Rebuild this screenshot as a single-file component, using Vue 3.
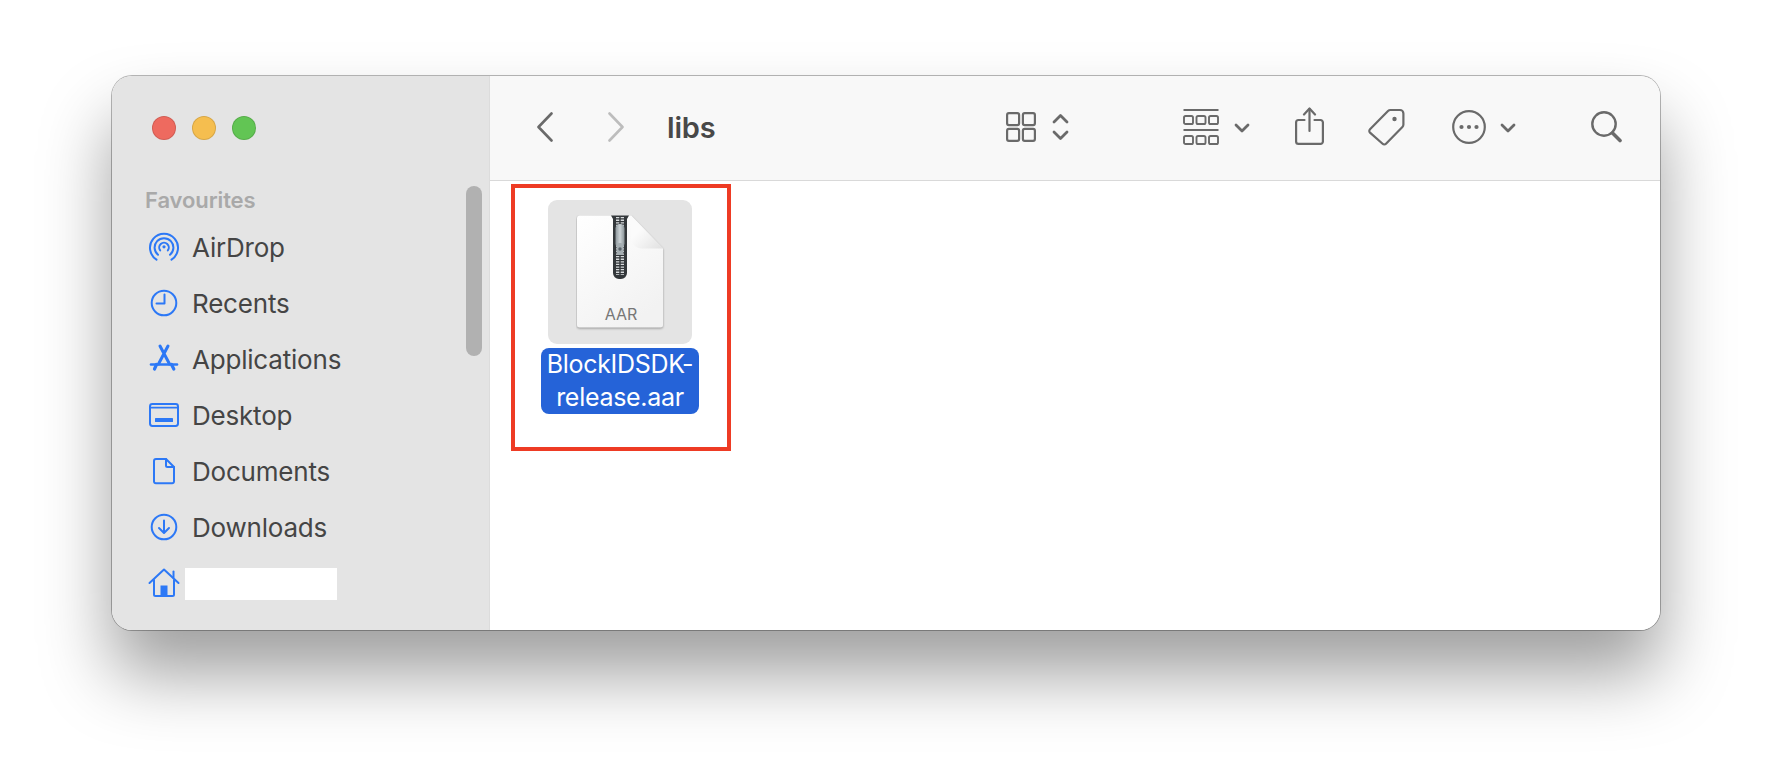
<script setup>
const favourites = [
  { label: 'AirDrop', icon: 'airdrop' },
  { label: 'Recents', icon: 'recents' },
  { label: 'Applications', icon: 'apps' },
  { label: 'Desktop', icon: 'desktop' },
  { label: 'Documents', icon: 'documents' },
  { label: 'Downloads', icon: 'downloads' },
];
</script>

<template>
  <div class="page">
    <div class="window">
      <aside class="sidebar">
        <div class="lights">
          <span class="light red"></span>
          <span class="light yellow"></span>
          <span class="light green"></span>
        </div>
        <div class="section-title">Favourites</div>
        <ul class="places">
          <li v-for="item in favourites" :key="item.label" class="place">
            <svg class="place-icon" viewBox="0 0 32 32" fill="none" stroke="#2c78f6" stroke-width="2" stroke-linecap="round" stroke-linejoin="round">
              <template v-if="item.icon === 'airdrop'">
                <path d="M8.500 28.600A14 14 0 1 1 23.500 28.600" />
                <path d="M10 23.800A9.400 9.400 0 1 1 22 23.800" />
                <path d="M12.200 19.400A4.800 4.800 0 1 1 19.800 19.400" />
                <circle cx="16" cy="15.800" r="1.600" fill="#2c78f6" stroke="none" />
              </template>
              <template v-else-if="item.icon === 'recents'">
                <circle cx="16" cy="16" r="12.300" />
                <path d="M16.500 7.500V16.500H8.500" />
              </template>
              <template v-else-if="item.icon === 'apps'">
                <path d="M12 3L21.500 21M20 3L10.500 21" stroke-width="3" />
                <path d="M3 21.500H29" stroke-width="2.600" />
                <path d="M8.500 21.500L6.500 26M23.500 21.500L25.800 26" stroke-width="3.200" />
              </template>
              <template v-else-if="item.icon === 'desktop'">
                <rect x="2" y="5" width="28" height="22" rx="2.400" />
                <path d="M2 8.600H30" stroke-width="1.600" />
                <rect x="7" y="19" width="18" height="4" rx="0.600" fill="#2c78f6" stroke="none" />
              </template>
              <template v-else-if="item.icon === 'documents'">
                <path d="M8 4H18L26 12V26.500A1.800 1.800 0 0 1 24.200 28.300H7.800A1.800 1.800 0 0 1 6 26.500V6A2 2 0 0 1 8 4Z" />
                <path d="M18 4V10.500A1.500 1.500 0 0 0 19.500 12H26" />
              </template>
              <template v-else>
                <circle cx="16" cy="16" r="12.300" />
                <path d="M16 9.500V21.500M11 17L16 22L21 17" />
              </template>
            </svg>
            <span>{{ item.label }}</span>
          </li>
          <li class="place home">
            <svg class="place-icon" viewBox="0 0 32 32" fill="none" stroke="#2c78f6" stroke-width="2" stroke-linecap="round" stroke-linejoin="round">
              <path d="M1.500 16L16 2.500L30.500 16" />
              <path d="M25.500 4.500V10.500" />
              <path d="M6 13V27.500A1.500 1.500 0 0 0 7.500 29H24.500A1.500 1.500 0 0 0 26 27.500V13" />
              <rect x="12.500" y="18.500" width="7" height="10.500" fill="#2c78f6" stroke="none" />
            </svg>
            <span class="redacted"></span>
          </li>
        </ul>
        <div class="scrollbar"></div>
      </aside>

      <main class="main">
        <header class="toolbar">
          <svg class="tb back" width="18" height="30" viewBox="0 0 18 30" fill="none" stroke="#6a6a6a" stroke-width="2.600" stroke-linecap="round" stroke-linejoin="round">
            <path d="M15.500 1.500L2.500 15L15.500 28.500" />
          </svg>
          <svg class="tb forward" width="18" height="30" viewBox="0 0 18 30" fill="none" stroke="#bdbdbd" stroke-width="2.600" stroke-linecap="round" stroke-linejoin="round">
            <path d="M2.500 1.500L15.500 15L2.500 28.500" />
          </svg>
          <h1 class="title">libs</h1>

          <svg class="tb view-grid" width="30" height="30" viewBox="0 0 30 30" fill="none" stroke="#6a6a6a" stroke-width="2.200">
            <rect x="1.100" y="1.100" width="12" height="12" rx="1.800" />
            <rect x="16.900" y="1.100" width="12" height="12" rx="1.800" />
            <rect x="1.100" y="16.900" width="12" height="12" rx="1.800" />
            <rect x="16.900" y="16.900" width="12" height="12" rx="1.800" />
          </svg>
          <svg class="tb updown" width="17" height="28" viewBox="0 0 17 28" fill="none" stroke="#6a6a6a" stroke-width="2.800" stroke-linecap="round" stroke-linejoin="round">
            <path d="M2 9L8.500 2.500L15 9" />
            <path d="M2 19L8.500 25.500L15 19" />
          </svg>

          <svg class="tb group" width="36" height="36" viewBox="0 0 36 36" fill="none" stroke="#6a6a6a">
            <path d="M0.500 1H35.500M0.500 21H35.500" stroke-width="2" />
            <g stroke-width="1.900">
              <rect x="1" y="7" width="9" height="8" rx="1.600" />
              <rect x="13.500" y="7" width="9" height="8" rx="1.600" />
              <rect x="26" y="7" width="9" height="8" rx="1.600" />
              <rect x="1" y="27" width="9" height="8" rx="1.600" />
              <rect x="13.500" y="27" width="9" height="8" rx="1.600" />
              <rect x="26" y="27" width="9" height="8" rx="1.600" />
            </g>
          </svg>
          <svg class="tb chev chev-group" width="16" height="10" viewBox="0 0 16 10" fill="none" stroke="#6a6a6a" stroke-width="2.800" stroke-linecap="round" stroke-linejoin="round">
            <path d="M2 2L8 8L14 2" />
          </svg>

          <svg class="tb share" width="29" height="38" viewBox="0 0 29 38" fill="none" stroke="#6a6a6a" stroke-width="2.200" stroke-linecap="round" stroke-linejoin="round">
            <path d="M14.500 2V24" />
            <path d="M9 7.500L14.500 1.500L20 7.500" />
            <path d="M9.500 13H3.500A2.400 2.400 0 0 0 1.100 15.400V34.500A2.400 2.400 0 0 0 3.500 36.900H25.500A2.400 2.400 0 0 0 27.900 34.500V15.400A2.400 2.400 0 0 0 25.500 13H19.500" />
          </svg>

          <svg class="tb tag" width="37" height="38" viewBox="0 0 37 38" fill="none" stroke="#6a6a6a" stroke-width="2.200" stroke-linejoin="round">
            <path d="M22.500 2H32A3.400 3.400 0 0 1 35.400 5.400V16.600A3.400 3.400 0 0 1 34.400 19L18 35.800A2.400 2.400 0 0 1 14.600 35.800L2 24.600A2.400 2.400 0 0 1 2 21.200L20 3A3.400 3.400 0 0 1 22.500 2Z" />
            <circle cx="26.500" cy="11" r="2.200" fill="#6a6a6a" stroke="none" />
          </svg>

          <svg class="tb more" width="34" height="34" viewBox="0 0 34 34" fill="none" stroke="#6a6a6a" stroke-width="2.200">
            <circle cx="17" cy="17" r="15.800" />
            <circle cx="9.500" cy="17" r="2.100" fill="#6a6a6a" stroke="none" />
            <circle cx="17" cy="17" r="2.100" fill="#6a6a6a" stroke="none" />
            <circle cx="24.500" cy="17" r="2.100" fill="#6a6a6a" stroke="none" />
          </svg>
          <svg class="tb chev chev-more" width="16" height="10" viewBox="0 0 16 10" fill="none" stroke="#6a6a6a" stroke-width="2.800" stroke-linecap="round" stroke-linejoin="round">
            <path d="M2 2L8 8L14 2" />
          </svg>

          <svg class="tb search" width="31" height="32" viewBox="0 0 31 32" fill="none" stroke="#6a6a6a" stroke-linecap="round">
            <circle cx="13" cy="13" r="11.700" stroke-width="2.400" />
            <path d="M21.500 22L29 29.500" stroke-width="3.600" />
          </svg>
        </header>

        <section class="files">
          <div class="highlight">
            <div class="file">
              <div class="thumb">
                <div class="doc">
                  <svg width="90" height="118" viewBox="0 0 90 118">
                    <defs>
                      <linearGradient id="paper" x1="0" y1="0" x2="0.600" y2="1">
                        <stop offset="0" stop-color="#ffffff" />
                        <stop offset="1" stop-color="#f2f2f2" />
                      </linearGradient>
                      <linearGradient id="fold" x1="0" y1="0" x2="1" y2="1">
                        <stop offset="0.350" stop-color="#fbfbfb" />
                        <stop offset="0.550" stop-color="#f4f4f4" />
                        <stop offset="1" stop-color="#e0e0e0" />
                      </linearGradient>
                      <linearGradient id="pull" x1="0" y1="0" x2="1" y2="0">
                        <stop offset="0" stop-color="#8d979c" />
                        <stop offset="0.500" stop-color="#ccd3d6" />
                        <stop offset="1" stop-color="#8a9498" />
                      </linearGradient>
                    </defs>
                    <g class="sheet">
                      <path d="M4 0.500H55L87 33.500V110A2.500 2.500 0 0 1 84.500 112.500H3.500A2.500 2.500 0 0 1 1 110V3.500A3 3 0 0 1 4 0.500Z" fill="url(#paper)" />
                    </g>
                    <path d="M55 0.500L87 33.500H66A11 11 0 0 1 55 22.500Z" fill="url(#fold)" />
                    <path d="M35 0.500H53L51 4V58A6 6 0 0 1 45 64H43A6 6 0 0 1 37 58V4Z" fill="#33373a" />
                    <path d="M44 2V60" stroke="#d8dbdd" stroke-width="8" stroke-dasharray="1.300 1.300" />
                    <path d="M44 2V61" stroke="#33373a" stroke-width="1.400" />
                    <rect x="39.500" y="9" width="9" height="24" rx="4.500" fill="url(#pull)" />
                    <rect x="40.500" y="28" width="7" height="12" rx="3" fill="#a5aeb2" />
                    <circle cx="44" cy="34" r="1.700" fill="#59626a" />
                  </svg>
                  <span class="ext">AAR</span>
                </div>
              </div>
              <div class="file-name">BlockIDSDK-<br />release.aar</div>
            </div>
          </div>
        </section>
      </main>
    </div>
  </div>
</template>

<style scoped>
.page {
  width: 1772px;
  height: 778px;
  padding: 76px 0 0 112px;
  box-sizing: border-box;
  background: #fff;
  overflow: hidden;
  font-family: Inter, "Liberation Sans", sans-serif;
}

.window {
  width: 1548px;
  height: 554px;
  display: flex;
  border-radius: 20px;
  background: #fff;
  box-shadow: 0 0 0 1px rgba(0, 0, 0, 0.28), 0 44px 70px rgba(0, 0, 0, 0.38);
}

.sidebar {
  position: relative;
  width: 378px;
  flex: none;
  box-sizing: border-box;
  padding-top: 40px;
  background: #e4e4e4;
  border-right: 1px solid #dcdcdc;
  border-radius: 20px 0 0 20px;
}

.lights {
  display: flex;
  gap: 16px;
  margin-left: 40px;
}

.light {
  width: 24px;
  height: 24px;
  box-sizing: border-box;
  border-radius: 50%;
  border: 1px solid rgba(0, 0, 0, 0.12);
}

.red { background: #ee6a5f; }
.yellow { background: #f5be4f; }
.green { background: #62c554; }

.section-title {
  margin: 47px 0 0 33px;
  font-size: 22px;
  line-height: 26px;
  font-weight: 600;
  color: #a9a9a9;
  letter-spacing: -0.1px;
}

.places {
  list-style: none;
  margin: 6px 0 0 36px;
  padding: 0;
}

.place {
  height: 56px;
  display: flex;
  align-items: center;
  gap: 12px;
  font-size: 26px;
  color: #454545;
  letter-spacing: -0.2px;
}

.place-icon {
  width: 32px;
  height: 32px;
  flex: none;
}

.redacted {
  width: 152px;
  height: 32px;
  margin: 1px 0 0 -7px;
  background: #fff;
}

.scrollbar {
  position: absolute;
  top: 110px;
  left: 354px;
  width: 16px;
  height: 170px;
  border-radius: 8px;
  background: #b1b1b1;
}

.main {
  flex: 1;
  display: flex;
  flex-direction: column;
  min-width: 0;
  border-radius: 0 20px 20px 0;
  overflow: hidden;
}

.toolbar {
  height: 105px;
  flex: none;
  display: flex;
  align-items: center;
  box-sizing: border-box;
  background: #f8f8f8;
  border-bottom: 1px solid #d9d9d9;
  padding-bottom: 2px;
}

.tb {
  flex: none;
}

.back { margin-left: 46px; }
.forward { margin-left: 53px; }

.title {
  margin: 0 0 0 42px;
  width: 50px;
  font-size: 29px;
  font-weight: 600;
  color: #484848;
  letter-spacing: -0.2px;
}

.view-grid { margin-left: 289px; }
.updown { margin-left: 16px; }
.group { margin-left: 114px; }
.chev-group { margin-left: 15px; margin-top: 1px; }
.share { margin-left: 45px; margin-bottom: 3px; }
.tag { margin-left: 44px; }
.more { margin-left: 47px; }
.chev-more { margin-left: 14px; margin-top: 1px; }
.search { margin-left: 75px; }

.files {
  flex: 1;
  padding: 3px 0 0 21px;
  background: #fff;
}

.highlight {
  width: 220px;
  height: 267px;
  box-sizing: border-box;
  border: 4px solid #ee3b24;
  padding: 12px 2px 0 0;
}

.file {
  display: flex;
  flex-direction: column;
  align-items: center;
}

.thumb {
  width: 144px;
  height: 144px;
  display: flex;
  justify-content: center;
  padding: 15px 0 0 2px;
  box-sizing: border-box;
  border-radius: 9px;
  background: #e4e4e4;
}

.doc {
  position: relative;
  width: 90px;
  height: 118px;
}

.doc svg {
  display: block;
}

.sheet {
  filter: drop-shadow(0 1.5px 1px rgba(0, 0, 0, 0.35));
}

.ext {
  position: absolute;
  left: 0;
  right: 0;
  top: 89px;
  text-align: center;
  font-size: 16px;
  line-height: 20px;
  color: #777;
}

.file-name {
  margin-top: 4px;
  width: 158px;
  height: 66px;
  border-radius: 8px;
  background: #2563d8;
  color: #fff;
  text-align: center;
  font-size: 25px;
  line-height: 33px;
  letter-spacing: -0.3px;
}
</style>

<style>
html, body {
  margin: 0;
  background: #fff;
}
</style>
